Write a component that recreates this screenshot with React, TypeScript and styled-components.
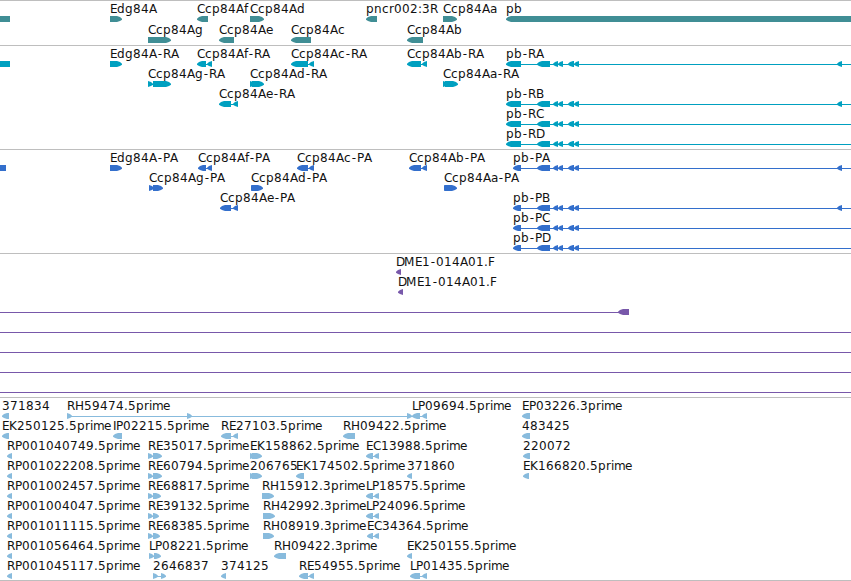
import React from "react";
import styled, { createGlobalStyle } from "styled-components";

const GlobalStyle = createGlobalStyle`
  * {
    margin: 0;
    padding: 0;
    box-sizing: border-box;
  }
  body {
    background: #fff;
    overflow: hidden;
  }
`;

const Browser = styled.main`
  display: flex;
  flex-direction: column;
  width: 851px;
  height: 581px;
  border-bottom: 1px solid #bebebe;
  background: #fff;
`;

const Track = styled.section<{ $height: number; $color: string }>`
  display: flex;
  flex-direction: column;
  flex: none;
  height: ${(props) => props.$height}px;
  border-top: 1px solid #bebebe;
  color: ${(props) => props.$color};
`;

const Lanes = styled.div`
  display: flex;
  flex-direction: column;
  padding-top: 3px;
`;

const Lane = styled.svg<{ $height: number }>`
  display: block;
  flex: none;
  width: 851px;
  height: ${(props) => props.$height}px;
  overflow: visible;
`;

const Label = styled.text`
  font-family: "DejaVu Sans", sans-serif;
  font-size: 12px;
  fill: #111;
  white-space: pre;
`;

type Strand = "+" | "-" | "";
type Block = [number, number];

interface Feature {
  label?: string;
  strand: Strand;
  blocks: Block[];
  line?: Block;
}

interface TrackData {
  name: string;
  color: string;
  height: number;
  pitch: number;
  lanes: Feature[][];
}

// shorthand for one feature
const f = (label: string, strand: Strand, blocks: Block[], line?: Block): Feature => ({
  label,
  strand,
  blocks,
  line,
});

const pb = (label: string, start: number, far = false): Feature =>
  f(
    label,
    "-",
    [
      [start, 521],
      [537, 550],
      [553, 558],
      [558, 563],
      [568, 574],
      [574, 579],
      ...(far ? ([[837, 842]] as Block[]) : []),
    ],
    [start + 2, 851]
  );

const rp = (id: string) => f(`RP00${id}.5prime`, "-", [[7, 12]]);

const span: Feature = { strand: "", blocks: [], line: [0, 851] };

const tracks: TrackData[] = [
  {
    name: "gene",
    color: "#408e95",
    height: 45,
    pitch: 21,
    lanes: [
      [
        f("", "", [[0, 10]]),
        f("Edg84A", "+", [[110, 122]]),
        f("Ccp84Af", "-", [[197, 208]]),
        f("Ccp84Ad", "+", [[250, 264]]),
        f("pncr002:3R", "-", [[366, 377]]),
        f("Ccp84Aa", "+", [[443, 457]]),
        f("pb", "-", [[506, 851]]),
      ],
      [
        f("Ccp84Ag", "+", [[148, 171]]),
        f("Ccp84Ae", "-", [[219, 234]]),
        f("Ccp84Ac", "-", [[291, 311]]),
        f("Ccp84Ab", "-", [[407, 423]]),
      ],
    ],
  },
  {
    name: "transcript",
    color: "#00a0c0",
    height: 104,
    pitch: 20,
    lanes: [
      [
        f("", "", [[0, 10]]),
        f("Edg84A-RA", "+", [[110, 122]]),
        f("Ccp84Af-RA", "-", [[197, 206], [207, 212]], [200, 212]),
        f("Ccp84Ac-RA", "-", [[291, 308], [309, 314]], [294, 314]),
        f("Ccp84Ab-RA", "-", [[407, 421], [422, 427]], [410, 427]),
        pb("pb-RA", 506, true),
      ],
      [
        f("Ccp84Ag-RA", "+", [[148, 153], [153, 171]], [148, 160]),
        f("Ccp84Ad-RA", "+", [[250, 255], [252, 264]]),
        f("Ccp84Aa-RA", "+", [[443, 448], [445, 458]]),
      ],
      [
        f("Ccp84Ae-RA", "-", [[219, 231], [233, 238]], [222, 238]),
        pb("pb-RB", 506, true),
      ],
      [pb("pb-RC", 506)],
      [pb("pb-RD", 506)],
    ],
  },
  {
    name: "cds",
    color: "#336fcc",
    height: 104,
    pitch: 20,
    lanes: [
      [
        f("", "", [[0, 6]]),
        f("Edg84A-PA", "+", [[110, 122]]),
        f("Ccp84Af-PA", "-", [[198, 206], [207, 212]], [200, 212]),
        f("Ccp84Ac-PA", "-", [[297, 308], [309, 314]], [300, 314]),
        f("Ccp84Ab-PA", "-", [[409, 421], [422, 427]], [412, 427]),
        pb("pb-PA", 513, true),
      ],
      [
        f("Ccp84Ag-PA", "+", [[149, 154], [153, 163]]),
        f("Ccp84Ad-PA", "+", [[251, 256], [252, 263]]),
        f("Ccp84Aa-PA", "+", [[444, 449], [445, 457]]),
      ],
      [
        f("Ccp84Ae-PA", "-", [[220, 231], [233, 238]], [223, 238]),
        pb("pb-PB", 513, true),
      ],
      [pb("pb-PC", 513)],
      [pb("pb-PD", 513)],
    ],
  },
  {
    name: "clone",
    color: "#7858aa",
    height: 144,
    pitch: 20,
    lanes: [
      [f("DME1-014A01.F", "-", [[396, 401]])],
      [f("DME1-014A01.F", "-", [[398, 403]])],
      [f("", "-", [[618, 629]], [0, 629])],
      [span],
      [span],
      [span],
      [span],
    ],
  },
  {
    name: "est",
    color: "#88bbdd",
    height: 183,
    pitch: 20,
    lanes: [
      [
        f("371834", "-", [[2, 9]]),
        f("RH59474.5prime", "+", [[67, 72], [187, 192], [407, 412]], [67, 412]),
        f("LP09694.5prime", "-", [[412, 420], [422, 427]], [412, 427]),
        f("EP03226.3prime", "-", [[522, 530]]),
      ],
      [
        f("EK250125.5prime", "-", [[2, 9]]),
        f("IP02215.5prime", "-", [[113, 122]]),
        f("RE27103.5prime", "-", [[221, 231], [233, 238]], [224, 238]),
        f("RH09422.5prime", "-", [[343, 355]]),
        f("483425", "-", [[522, 530]]),
      ],
      [
        rp("1040749"),
        f("RE35017.5prime", "+", [[148, 153], [153, 162]], [148, 158]),
        f("EK158862.5prime", "+", [[250, 255], [252, 262]]),
        f("EC13988.5prime", "-", [[366, 373], [374, 379]], [370, 379]),
        f("220072", "-", [[523, 530]]),
      ],
      [
        rp("1022208"),
        f("RE60794.5prime", "+", [[148, 153], [153, 162]], [148, 158]),
        f("206765", "+", [[250, 255], [252, 262]]),
        f("EK174502.5prime", "-", [[296, 304]]),
        f("371860", "-", [[407, 412]]),
        f("EK166820.5prime", "-", [[523, 529]]),
      ],
      [
        rp("1002457"),
        f("RE68817.5prime", "+", [[148, 153], [153, 161]], [148, 158]),
        f("RH15912.3prime", "+", [[262, 274]]),
        f("LP18575.5prime", "-", [[366, 373], [374, 379]], [370, 379]),
      ],
      [
        rp("1004047"),
        f("RE39132.5prime", "+", [[148, 153], [153, 159]], [148, 158]),
        f("RH42992.3prime", "+", [[263, 275]]),
        f("LP24096.5prime", "-", [[366, 373], [374, 379]], [370, 379]),
      ],
      [
        rp("1011115"),
        f("RE68385.5prime", "+", [[148, 153], [153, 160]], [148, 158]),
        f("RH08919.3prime", "+", [[263, 274]]),
        f("EC34364.5prime", "-", [[367, 373], [374, 379]], [370, 379]),
      ],
      [
        rp("1056464"),
        f("LP08221.5prime", "+", [[149, 154], [154, 161]], [149, 158]),
        f("RH09422.3prime", "-", [[274, 286]]),
        f("EK250155.5prime", "-", [[407, 412]]),
      ],
      [
        rp("1045117"),
        f("2646837", "+", [[153, 158], [161, 166]], [153, 166]),
        f("374125", "-", [[221, 226]]),
        f("RE54955.5prime", "-", [[299, 308], [309, 314]], [302, 314]),
        f("LP01435.5prime", "-", [[410, 420], [422, 427]], [413, 427]),
      ],
    ],
  },
];

// whole-pixel advance of every character; digits and the rest are 8
const advance: Record<string, number> = {
  "-": 6,
  ".": 4,
  ":": 4,
  E: 7,
  H: 9,
  P: 7,
  L: 6,
  I: 3,
  M: 11,
  c: 7,
  e: 7,
  f: 4,
  i: 3,
  m: 11,
  r: 5,
  a: 7,
};

const charPositions = (text: string, start: number) => {
  let x = start;
  return text
    .split("")
    .map((char) => {
      const at = char === "-" ? x + 0.8 : x;
      x += advance[char] ?? 8;
      return at;
    })
    .join(" ");
};

const blockPath = ([x1, x2]: Block, strand: Strand) => {
  if (strand === "-") {
    const neck = x1 + 5;
    return `M${x2} 12H${neck}L${x1 + 2} 13L${x1} 14.8V15.8L${x1 + 2} 17L${neck} 18H${x2}Z`;
  }
  if (strand === "+") {
    const neck = x2 - 5;
    return `M${x1} 12H${neck}L${x2 - 2} 13L${x2} 14.8V15.8L${x2 - 2} 17L${neck} 18H${x1}Z`;
  }
  return `M${x1} 12H${x2}V18H${x1}Z`;
};

const FeatureGlyph = ({ feature }: { feature: Feature }) => {
  const { label, strand, blocks, line } = feature;
  return (
    <g>
      {line && (
        <rect
          x={line[0]}
          y={15}
          width={line[1] - line[0]}
          height={1}
          fill="currentColor"
        />
      )}
      {blocks.map((block) => (
        <path key={block[0]} d={blockPath(block, strand)} fill="currentColor" />
      ))}
      {label && (
        <Label x={charPositions(label, blocks[0][0])} y={9}>
          {label}
        </Label>
      )}
    </g>
  );
};

const App = () => {
  return (
    <>
      <GlobalStyle />
      <Browser>
        {tracks.map((track) => (
          <Track key={track.name} $height={track.height} $color={track.color}>
            <Lanes>
              {track.lanes.map((features, lane) => (
                <Lane key={lane} $height={track.pitch}>
                  {features.map((feature, index) => (
                    <FeatureGlyph key={index} feature={feature} />
                  ))}
                </Lane>
              ))}
            </Lanes>
          </Track>
        ))}
      </Browser>
    </>
  );
};

export default App;
